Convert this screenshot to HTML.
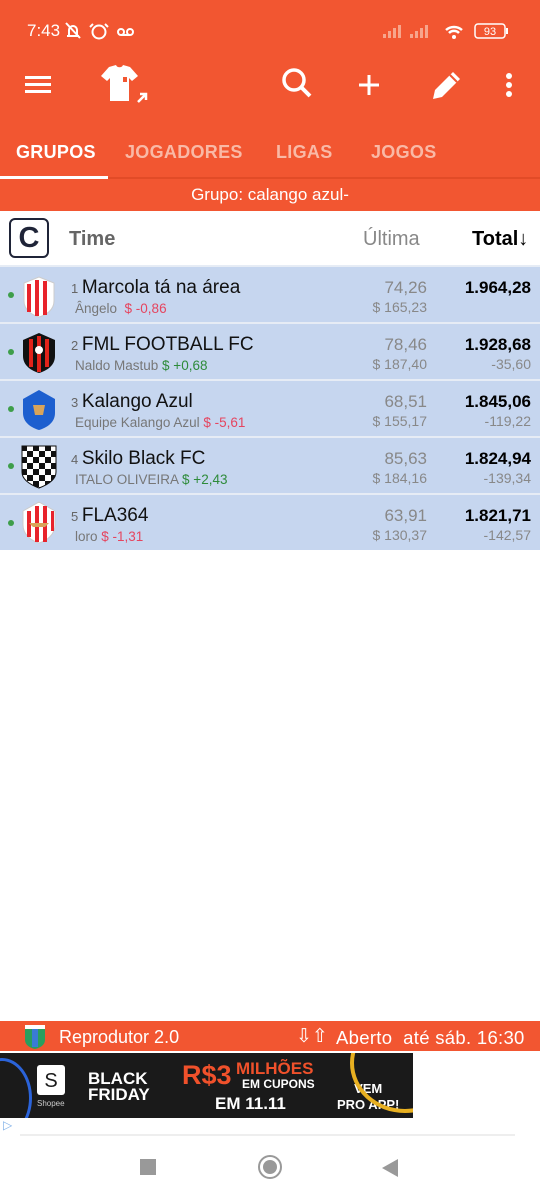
<!DOCTYPE html>
<html><head><meta charset="utf-8"><style>
*{margin:0;padding:0;box-sizing:border-box}
body{width:540px;height:1200px;background:#fff;font-family:"Liberation Sans",Roboto,sans-serif;position:relative;overflow:hidden}
.abs{position:absolute}
.top{left:0;top:0;width:540px;height:211px;background:#F25631}
.st{color:#fff;font-size:17px}
.tab{color:#F9B9A6;font-size:18px;font-weight:bold;letter-spacing:.3px;top:142px}
.row{position:absolute;left:0;width:540px;height:55px;background:#C6D6EF}
.dot{position:absolute;left:8px;top:25px;width:6px;height:6px;border-radius:50%;background:#3E9E4A}
.nm{position:absolute;left:71px;top:10px;font-size:19px;color:#111}
.nm small{font-size:13px;color:#666}
.sub{position:absolute;left:75px;top:34px;font-size:13.5px;color:#777}
.r{color:#E5455F}.g{color:#2E8B3A}
.la{position:absolute;right:113px;text-align:right;color:#888}
.tot{position:absolute;right:9px;text-align:right}
</style></head><body>
<div class="abs top"></div>
<div class="abs st" style="left:27px;top:21px">7:43</div>
<svg class="abs" style="left:64px;top:20px" width="70" height="22" viewBox="0 0 70 22" fill="none" stroke="#fff" stroke-width="2"><path d="M3 16h12M5 16V10a4 4 0 018 0v6M2 3l14 15"/><circle cx="35" cy="12" r="6.5"/><path d="M29 4l-3 3M41 4l3 3"/><circle cx="57" cy="12" r="3"/><circle cx="66" cy="12" r="3"/><path d="M57 15h9"/></svg>
<svg class="abs" style="left:380px;top:20px" width="130" height="22" viewBox="0 0 130 22"><g fill="#F7A58C"><rect x="3" y="14" width="3" height="4"/><rect x="8" y="11" width="3" height="7"/><rect x="13" y="8" width="3" height="10"/><rect x="30" y="14" width="3" height="4"/><rect x="35" y="11" width="3" height="7"/><rect x="40" y="8" width="3" height="10"/><rect x="45" y="5" width="3" height="13"/><rect x="18" y="5" width="3" height="13"/></g><path d="M66 10a12 12 0 0116 0M69 13a7 7 0 0110 0" stroke="#fff" stroke-width="2.5" fill="none"/><circle cx="74" cy="17" r="2" fill="#fff"/><rect x="95" y="4" width="30" height="14" rx="3" fill="none" stroke="#fff" stroke-width="1.5"/><rect x="126" y="8" width="2" height="6" fill="#fff"/><text x="110" y="15" font-size="11" fill="#fff" text-anchor="middle" font-family="Liberation Sans">93</text></svg>
<svg class="abs" style="left:24px;top:74px" width="28" height="22"><g fill="#fff"><rect x="1" y="2" width="26" height="3"/><rect x="1" y="9" width="26" height="3"/><rect x="1" y="16" width="26" height="3"/></g></svg>
<svg class="abs" style="left:96px;top:64px" width="54" height="42" viewBox="0 0 54 42"><path d="M13 3l7-2c1 3 6 3 7 0l7 2 8 9-6 5-3-3v23H14V14l-3 3-6-5z" fill="#fff"/><rect x="27" y="13" width="4" height="5" fill="#F25631"/><path d="M42 38l8-8M44 30h6v6" stroke="#fff" stroke-width="2.5" fill="none"/></svg>
<svg class="abs" style="left:280px;top:66px" width="34" height="36"><circle cx="14" cy="14" r="10" stroke="#fff" stroke-width="3.5" fill="none"/><path d="M21 21l9 9" stroke="#fff" stroke-width="4"/></svg>
<svg class="abs" style="left:356px;top:72px" width="26" height="26"><path d="M13 3v20M3 13h20" stroke="#fff" stroke-width="3"/></svg>
<svg class="abs" style="left:430px;top:68px" width="34" height="34"><path d="M3 31l2-9 18-18 7 7-18 18z" fill="#fff"/><path d="M20 7l7 7" stroke="#F25631" stroke-width="2"/></svg>
<svg class="abs" style="left:503px;top:72px" width="12" height="28"><circle cx="6" cy="4" r="3" fill="#fff"/><circle cx="6" cy="13" r="3" fill="#fff"/><circle cx="6" cy="22" r="3" fill="#fff"/></svg>
<div class="abs tab" style="left:16px;color:#fff">GRUPOS</div>
<div class="abs tab" style="left:125px">JOGADORES</div>
<div class="abs tab" style="left:276px">LIGAS</div>
<div class="abs tab" style="left:371px">JOGOS</div>
<div class="abs" style="left:0;top:176px;width:108px;height:3px;background:#fff"></div>
<div class="abs" style="left:108px;top:177px;width:432px;height:2px;background:#E24B27"></div>
<div class="abs" style="left:0;top:185px;width:540px;text-align:center;color:#fff;font-size:17px">Grupo: calango azul-</div>
<div class="abs" style="left:9px;top:218px;width:40px;height:40px;border:2px solid #1F2438;border-radius:6px;text-align:center;font:bold 29px/36px 'Liberation Sans',sans-serif;color:#1F2438">C</div>
<div class="abs" style="left:69px;top:228px;font-size:20px;font-weight:bold;color:#666">Time</div>
<div class="abs" style="left:363px;top:228px;font-size:20px;color:#888">Última</div>
<div class="abs" style="left:472px;top:228px;font-size:20px;font-weight:bold;color:#000">Total↓</div>
<div class="abs" style="left:0;top:265px;width:540px;height:285px;background:#E6ECF5"></div>

<div class="row" style="top:267px"><div class="dot"></div>
<svg class="abs" style="left:21px;top:9px" width="36" height="42" viewBox="0 0 36 42"><path d="M18 1L33 7v18c0 9-8 14-15 16C11 39 3 34 3 25V7z" fill="#fff" stroke="#ccc"/><g fill="#E8232B"><rect x="6" y="8" width="4" height="28"/><rect x="14" y="4" width="4" height="36"/><rect x="22" y="5" width="4" height="34"/></g></svg>
<div class="nm"><small>1 </small>Marcola tá na área</div><div class="sub">Ângelo <span class="r">&nbsp;$ -0,86</span></div>
<div class="la" style="top:11px;font-size:17px">74,26</div><div class="la" style="top:32px;font-size:14px">$ 165,23</div>
<div class="tot" style="top:11px;font-size:17px;font-weight:bold">1.964,28</div></div>

<div class="row" style="top:324px"><div class="dot"></div>
<svg class="abs" style="left:21px;top:8px" width="36" height="42" viewBox="0 0 36 42"><path d="M18 1L34 8v16c0 10-9 15-16 17C11 39 2 34 2 24V8z" fill="#111"/><g fill="#E2231A"><rect x="8" y="7" width="4" height="28"/><rect x="16" y="4" width="4" height="36"/><rect x="24" y="7" width="4" height="28"/></g><circle cx="18" cy="18" r="4" fill="#fff"/></svg>
<div class="nm"><small>2 </small>FML FOOTBALL FC</div><div class="sub">Naldo Mastub <span class="g">$ +0,68</span></div>
<div class="la" style="top:11px;font-size:17px">78,46</div><div class="la" style="top:32px;font-size:14px">$ 187,40</div>
<div class="tot" style="top:11px;font-size:17px;font-weight:bold">1.928,68</div><div class="tot" style="top:32px;font-size:14px;color:#888">-35,60</div></div>

<div class="row" style="top:381px"><div class="dot"></div>
<svg class="abs" style="left:21px;top:8px" width="36" height="42" viewBox="0 0 36 42"><path d="M18 1L34 10v14c0 10-9 15-16 17C11 39 2 34 2 24V10z" fill="#1D5FCF"/><path d="M12 16h12l-2 10h-8z" fill="#D9A45A"/></svg>
<div class="nm"><small>3 </small>Kalango Azul</div><div class="sub">Equipe Kalango Azul <span class="r">$ -5,61</span></div>
<div class="la" style="top:11px;font-size:17px">68,51</div><div class="la" style="top:32px;font-size:14px">$ 155,17</div>
<div class="tot" style="top:11px;font-size:17px;font-weight:bold">1.845,06</div><div class="tot" style="top:32px;font-size:14px;color:#888">-119,22</div></div>

<div class="row" style="top:438px"><div class="dot"></div>
<svg class="abs" style="left:21px;top:7px" width="36" height="44" viewBox="0 0 36 44"><defs><pattern id="ck" width="12" height="12" patternUnits="userSpaceOnUse"><rect width="12" height="12" fill="#fff"/><rect width="6" height="6" fill="#111"/><rect x="6" y="6" width="6" height="6" fill="#111"/></pattern></defs><path d="M1 1h34v26c0 8-9 13-17 16C10 40 1 35 1 27z" fill="url(#ck)" stroke="#111"/></svg>
<div class="nm"><small>4 </small>Skilo Black FC</div><div class="sub">ITALO OLIVEIRA <span class="g">$ +2,43</span></div>
<div class="la" style="top:11px;font-size:17px">85,63</div><div class="la" style="top:32px;font-size:14px">$ 184,16</div>
<div class="tot" style="top:11px;font-size:17px;font-weight:bold">1.824,94</div><div class="tot" style="top:32px;font-size:14px;color:#888">-139,34</div></div>

<div class="row" style="top:495px"><div class="dot"></div>
<svg class="abs" style="left:21px;top:6px" width="36" height="44" viewBox="0 0 36 44"><path d="M18 1L34 10v14c0 10-9 16-16 18C11 40 2 34 2 24V10z" fill="#fff" stroke="#ccc"/><g fill="#E8232B"><rect x="6" y="10" width="4" height="26"/><rect x="14" y="5" width="4" height="36"/><rect x="22" y="5" width="4" height="36"/><rect x="30" y="10" width="3" height="20"/></g><path d="M8 22h20l-4 4H12z" fill="#D9A45A"/></svg>
<div class="nm"><small>5 </small>FLA364</div><div class="sub">loro <span class="r">$ -1,31</span></div>
<div class="la" style="top:11px;font-size:17px">63,91</div><div class="la" style="top:32px;font-size:14px">$ 130,37</div>
<div class="tot" style="top:11px;font-size:17px;font-weight:bold">1.821,71</div><div class="tot" style="top:32px;font-size:14px;color:#888">-142,57</div></div>

<div class="abs" style="left:0;top:1021px;width:540px;height:30px;background:#F25631"></div>
<svg class="abs" style="left:24px;top:1024px" width="22" height="26"><path d="M1 1h20v15c0 5-5 8-10 9C6 24 1 21 1 16z" fill="#2A9E5E"/><rect x="8" y="3" width="6" height="20" fill="#3A7BD5"/><rect x="1" y="1" width="20" height="4" fill="#fff"/></svg>
<div class="abs" style="left:59px;top:1027px;color:#fff;font-size:18px">Reprodutor 2.0</div>
<div class="abs" style="left:296px;top:1025px;color:#fff;font-size:19px">⇩⇧</div>
<div class="abs" style="left:336px;top:1027px;color:#fff;font-size:18.5px;letter-spacing:.3px">Aberto&nbsp; até sáb. 16:30</div>
<div class="abs" style="left:0;top:1053px;width:413px;height:65px;background:#1A1A1A;overflow:hidden">
<div class="abs" style="left:-28px;top:5px;width:60px;height:80px;border:3px solid #2B63D9;border-radius:50%"></div>
<div class="abs" style="left:37px;top:12px;width:28px;height:30px;background:#fff;border-radius:3px;text-align:center;font:20px/32px 'Liberation Sans';color:#1a1a1a">S</div>
<div class="abs" style="left:37px;top:46px;color:#ccc;font-size:8px">Shopee</div>
<div class="abs" style="left:88px;top:18px;color:#fff;font:bold 17px/16px 'Liberation Sans'">BLACK<br>FRIDAY</div>
<div class="abs" style="left:182px;top:7px;color:#F0512B;font:bold 27px 'Liberation Sans'">R$3</div>
<div class="abs" style="left:236px;top:6px;color:#F0512B;font:bold 17px 'Liberation Sans'">MILHÕES</div>
<div class="abs" style="left:242px;top:24px;color:#fff;font:bold 12px 'Liberation Sans'">EM CUPONS</div>
<div class="abs" style="left:215px;top:41px;color:#fff;font:bold 17px 'Liberation Sans'">EM 11.11</div>
<div class="abs" style="left:337px;top:28px;color:#fff;font:bold 13px/16px 'Liberation Sans';text-align:center">VEM<br>PRO APP!</div>
<div class="abs" style="left:350px;top:-40px;width:110px;height:100px;border:4px solid #E8B021;border-radius:50%"></div>
</div>
<div class="abs" style="left:3px;top:1118px;color:#7FB0E8;font-size:12px">▷</div>
<div class="abs" style="left:20px;top:1134px;width:495px;height:2px;background:#EEE"></div>
<div class="abs" style="left:140px;top:1159px;width:16px;height:16px;background:#999"></div>
<div class="abs" style="left:258px;top:1155px;width:24px;height:24px;border:2.5px solid #999;border-radius:50%"><div style="margin:2.5px;width:14px;height:14px;border-radius:50%;background:#999"></div></div>
<svg class="abs" style="left:381px;top:1158px" width="18" height="20"><path d="M17 1v18L1 10z" fill="#999"/></svg>
</body></html>
